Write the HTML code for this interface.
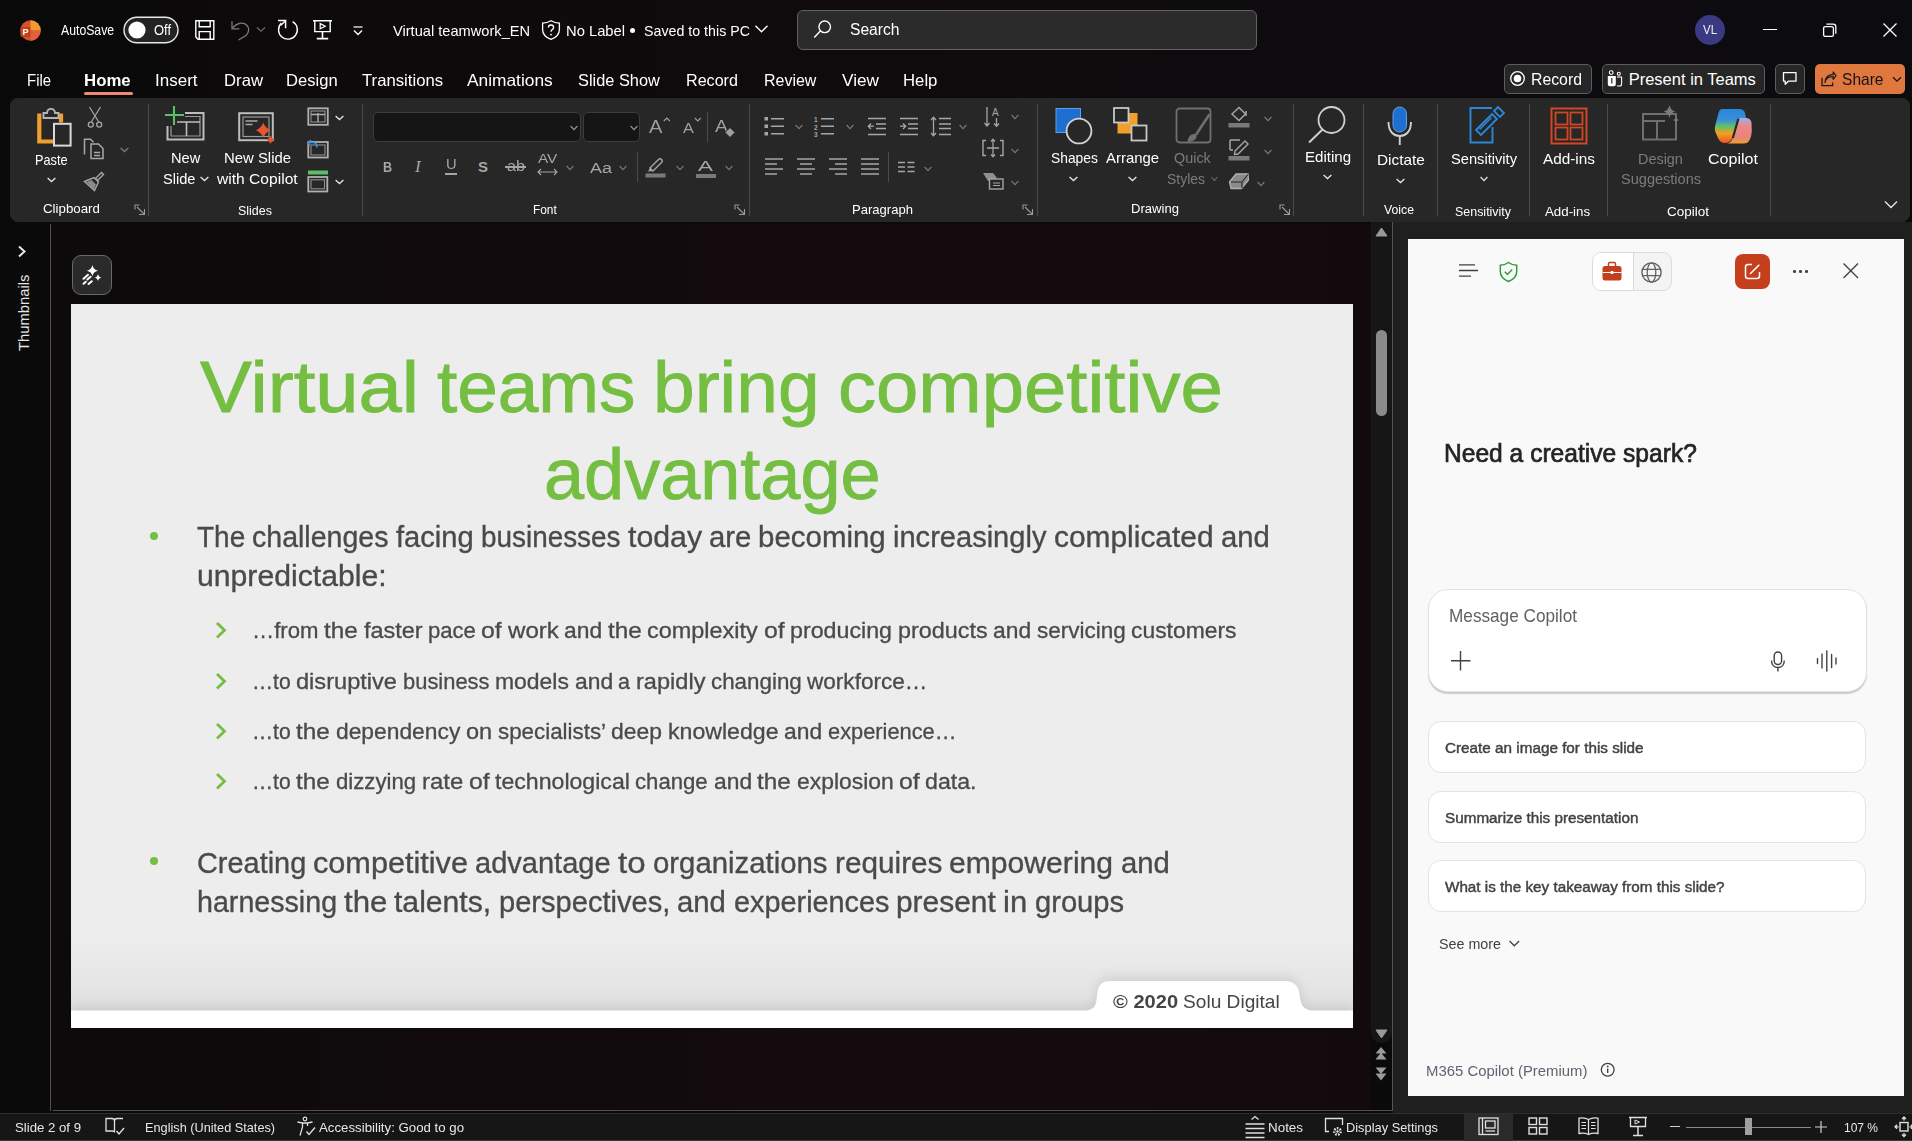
<!DOCTYPE html>
<html><head><meta charset="utf-8"><style>
html,body{margin:0;padding:0;width:1912px;height:1141px;overflow:hidden;background:#0b0a0b}
body{position:relative;font-family:"Liberation Sans",sans-serif}
.abs{position:absolute}
.t{position:absolute;white-space:nowrap;line-height:1;transform-origin:0 0}
svg{overflow:visible}
</style></head><body>
<div class="abs" style="left:0;top:0;width:1912px;height:98px;background:linear-gradient(90deg,#0a090a 0%,#0f0b0d 40%,#0e0b0e 70%,#0c0b0f 100%)"></div>
<div class="abs" style="left:0;top:98px;width:1912px;height:1015px;background:#0b0a0b"></div>
<div class="abs" style="left:10px;top:98px;width:1900px;height:124px;border-radius:8px;background:#272727"></div>
<div class="abs" style="left:51px;top:224px;width:1320px;height:886px;background:linear-gradient(90deg,#0c0a0b 0%,#100a0c 30%,#140b0e 65%,#130a0d 100%)"></div>
<div class="abs" style="left:50px;top:224px;width:1px;height:887px;background:#505050"></div>
<div class="abs" style="left:53px;top:1110px;width:1339px;height:1px;background:#505050"></div>
<div class="abs" style="left:1371px;top:222px;width:21px;height:821px;background:#161616;border-radius:0 0 10px 10px"></div>
<div class="abs" style="left:1392px;top:222px;width:1px;height:889px;background:#555"></div>
<div class="abs" style="left:1393px;top:222px;width:519px;height:891px;background:#1f1f1f"></div>
<div class="abs" style="left:1376px;top:330px;width:11px;height:86px;border-radius:6px;background:#8a8a8a"></div>
<div class="abs" style="left:0;top:1113px;width:1912px;height:28px;background:#161616;border-top:1px solid #2e2e2e;box-sizing:border-box"></div>
<div class="abs" style="left:71px;top:304px;width:1282px;height:724px;background:#ededed;overflow:hidden"><div class="abs" style="left:0;top:630px;width:1282px;height:77px;background:linear-gradient(180deg,rgba(225,225,225,0) 0%,rgba(224,224,224,.55) 60%,#dfdfdf 100%)"></div><svg class="abs" style="left:0;top:640px;filter:drop-shadow(0 -3px 6px rgba(0,0,0,0.10))" width="1282" height="84" viewBox="0 640 1282 84"><path d="M0 706.6 H1013 C1021 706.6 1025 703 1025.5 696 L1026.5 688 C1027.5 681 1031 677 1039 677 H1214 C1222 677 1227 681 1228 688 L1229.5 696 C1230.5 703 1235 706.6 1243 706.6 H1282 V724 H0 Z" fill="#ffffff"/></svg></div>
<div class="t" style="left:199.90px;top:350.41px;font-size:73px;color:#74be42;transform:scaleX(1.0658);-webkit-text-stroke:0.9px #74be42;">Virtual</div>
<div class="t" style="left:436.96px;top:350.41px;font-size:73px;color:#74be42;transform:scaleX(0.9983);-webkit-text-stroke:0.9px #74be42;">teams</div>
<div class="t" style="left:653.34px;top:350.41px;font-size:73px;color:#74be42;transform:scaleX(1.0261);-webkit-text-stroke:0.9px #74be42;">bring</div>
<div class="t" style="left:837.83px;top:350.41px;font-size:73px;color:#74be42;transform:scaleX(1.0421);-webkit-text-stroke:0.9px #74be42;">competitive</div>
<div class="t" style="left:543.80px;top:437.21px;font-size:73px;color:#74be42;transform:scaleX(0.9871);-webkit-text-stroke:0.9px #74be42;">advantage</div>
<div class="t" style="left:196.80px;top:522.00px;font-size:30px;color:#4a4a4a;transform:scaleX(0.9335);-webkit-text-stroke:0.35px #4a4a4a;">The</div>
<div class="t" style="left:252.28px;top:522.00px;font-size:30px;color:#4a4a4a;transform:scaleX(0.9509);-webkit-text-stroke:0.35px #4a4a4a;">challenges</div>
<div class="t" style="left:395.88px;top:522.00px;font-size:30px;color:#4a4a4a;transform:scaleX(0.9709);-webkit-text-stroke:0.35px #4a4a4a;">facing</div>
<div class="t" style="left:480.82px;top:522.00px;font-size:30px;color:#4a4a4a;transform:scaleX(0.9293);-webkit-text-stroke:0.35px #4a4a4a;">businesses</div>
<div class="t" style="left:627.52px;top:522.00px;font-size:30px;color:#4a4a4a;transform:scaleX(1.0098);-webkit-text-stroke:0.35px #4a4a4a;">today</div>
<div class="t" style="left:708.84px;top:522.00px;font-size:30px;color:#4a4a4a;transform:scaleX(0.9765);-webkit-text-stroke:0.35px #4a4a4a;">are</div>
<div class="t" style="left:758.41px;top:522.00px;font-size:30px;color:#4a4a4a;transform:scaleX(0.9819);-webkit-text-stroke:0.35px #4a4a4a;">becoming</div>
<div class="t" style="left:893.35px;top:522.00px;font-size:30px;color:#4a4a4a;transform:scaleX(0.9685);-webkit-text-stroke:0.35px #4a4a4a;">increasingly</div>
<div class="t" style="left:1053.99px;top:522.00px;font-size:30px;color:#4a4a4a;transform:scaleX(0.9966);-webkit-text-stroke:0.35px #4a4a4a;">complicated</div>
<div class="t" style="left:1220.74px;top:522.00px;font-size:30px;color:#4a4a4a;transform:scaleX(0.9765);-webkit-text-stroke:0.35px #4a4a4a;">and</div>
<div class="t" style="left:196.80px;top:560.81px;font-size:30px;color:#4a4a4a;transform:scaleX(1.0060);-webkit-text-stroke:0.35px #4a4a4a;">unpredictable:</div>
<div class="t" style="left:252.10px;top:620.70px;font-size:21.5px;color:#4a4a4a;transform:scaleX(1.0306);-webkit-text-stroke:0.3px #4a4a4a;">…from</div>
<div class="t" style="left:324.20px;top:620.70px;font-size:21.5px;color:#4a4a4a;transform:scaleX(1.1304);-webkit-text-stroke:0.3px #4a4a4a;">the</div>
<div class="t" style="left:363.61px;top:620.70px;font-size:21.5px;color:#4a4a4a;transform:scaleX(1.0904);-webkit-text-stroke:0.3px #4a4a4a;">faster</div>
<div class="t" style="left:427.86px;top:620.70px;font-size:21.5px;color:#4a4a4a;transform:scaleX(1.0272);-webkit-text-stroke:0.3px #4a4a4a;">pace</div>
<div class="t" style="left:481.38px;top:620.70px;font-size:21.5px;color:#4a4a4a;transform:scaleX(1.1552);-webkit-text-stroke:0.3px #4a4a4a;">of</div>
<div class="t" style="left:507.72px;top:620.70px;font-size:21.5px;color:#4a4a4a;transform:scaleX(1.1211);-webkit-text-stroke:0.3px #4a4a4a;">work</div>
<div class="t" style="left:564.23px;top:620.70px;font-size:21.5px;color:#4a4a4a;transform:scaleX(1.0611);-webkit-text-stroke:0.3px #4a4a4a;">and</div>
<div class="t" style="left:607.92px;top:620.70px;font-size:21.5px;color:#4a4a4a;transform:scaleX(1.1304);-webkit-text-stroke:0.3px #4a4a4a;">the</div>
<div class="t" style="left:647.33px;top:620.70px;font-size:21.5px;color:#4a4a4a;transform:scaleX(1.0906);-webkit-text-stroke:0.3px #4a4a4a;">complexity</div>
<div class="t" style="left:763.71px;top:620.70px;font-size:21.5px;color:#4a4a4a;transform:scaleX(1.1552);-webkit-text-stroke:0.3px #4a4a4a;">of</div>
<div class="t" style="left:790.04px;top:620.70px;font-size:21.5px;color:#4a4a4a;transform:scaleX(1.0804);-webkit-text-stroke:0.3px #4a4a4a;">producing</div>
<div class="t" style="left:897.69px;top:620.70px;font-size:21.5px;color:#4a4a4a;transform:scaleX(1.0865);-webkit-text-stroke:0.3px #4a4a4a;">products</div>
<div class="t" style="left:992.91px;top:620.70px;font-size:21.5px;color:#4a4a4a;transform:scaleX(1.0611);-webkit-text-stroke:0.3px #4a4a4a;">and</div>
<div class="t" style="left:1036.60px;top:620.70px;font-size:21.5px;color:#4a4a4a;transform:scaleX(1.0461);-webkit-text-stroke:0.3px #4a4a4a;">servicing</div>
<div class="t" style="left:1130.97px;top:620.70px;font-size:21.5px;color:#4a4a4a;transform:scaleX(1.0633);-webkit-text-stroke:0.3px #4a4a4a;">customers</div>
<div class="t" style="left:252.10px;top:671.70px;font-size:21.5px;color:#4a4a4a;transform:scaleX(0.9807);-webkit-text-stroke:0.3px #4a4a4a;">…to</div>
<div class="t" style="left:296.39px;top:671.70px;font-size:21.5px;color:#4a4a4a;transform:scaleX(1.0975);-webkit-text-stroke:0.3px #4a4a4a;">disruptive</div>
<div class="t" style="left:403.01px;top:671.70px;font-size:21.5px;color:#4a4a4a;transform:scaleX(1.0193);-webkit-text-stroke:0.3px #4a4a4a;">business</div>
<div class="t" style="left:495.13px;top:671.70px;font-size:21.5px;color:#4a4a4a;transform:scaleX(1.0661);-webkit-text-stroke:0.3px #4a4a4a;">models</div>
<div class="t" style="left:574.64px;top:671.70px;font-size:21.5px;color:#4a4a4a;transform:scaleX(1.0611);-webkit-text-stroke:0.3px #4a4a4a;">and</div>
<div class="t" style="left:618.33px;top:671.70px;font-size:21.5px;color:#4a4a4a;transform:scaleX(0.9967);-webkit-text-stroke:0.3px #4a4a4a;">a</div>
<div class="t" style="left:635.87px;top:671.70px;font-size:21.5px;color:#4a4a4a;transform:scaleX(1.0960);-webkit-text-stroke:0.3px #4a4a4a;">rapidly</div>
<div class="t" style="left:710.91px;top:671.70px;font-size:21.5px;color:#4a4a4a;transform:scaleX(1.0403);-webkit-text-stroke:0.3px #4a4a4a;">changing</div>
<div class="t" style="left:807.32px;top:671.70px;font-size:21.5px;color:#4a4a4a;transform:scaleX(1.0497);-webkit-text-stroke:0.3px #4a4a4a;">workforce…</div>
<div class="t" style="left:252.10px;top:722.20px;font-size:21.5px;color:#4a4a4a;transform:scaleX(0.9807);-webkit-text-stroke:0.3px #4a4a4a;">…to</div>
<div class="t" style="left:296.39px;top:722.20px;font-size:21.5px;color:#4a4a4a;transform:scaleX(1.1304);-webkit-text-stroke:0.3px #4a4a4a;">the</div>
<div class="t" style="left:335.80px;top:722.20px;font-size:21.5px;color:#4a4a4a;transform:scaleX(1.0608);-webkit-text-stroke:0.3px #4a4a4a;">dependency</div>
<div class="t" style="left:465.71px;top:722.20px;font-size:21.5px;color:#4a4a4a;transform:scaleX(1.0953);-webkit-text-stroke:0.3px #4a4a4a;">on</div>
<div class="t" style="left:497.52px;top:722.20px;font-size:21.5px;color:#4a4a4a;transform:scaleX(1.0396);-webkit-text-stroke:0.3px #4a4a4a;">specialists’</div>
<div class="t" style="left:611.22px;top:722.20px;font-size:21.5px;color:#4a4a4a;transform:scaleX(1.0643);-webkit-text-stroke:0.3px #4a4a4a;">deep</div>
<div class="t" style="left:667.75px;top:722.20px;font-size:21.5px;color:#4a4a4a;transform:scaleX(1.0753);-webkit-text-stroke:0.3px #4a4a4a;">knowledge</div>
<div class="t" style="left:783.91px;top:722.20px;font-size:21.5px;color:#4a4a4a;transform:scaleX(1.0611);-webkit-text-stroke:0.3px #4a4a4a;">and</div>
<div class="t" style="left:827.60px;top:722.20px;font-size:21.5px;color:#4a4a4a;transform:scaleX(1.0148);-webkit-text-stroke:0.3px #4a4a4a;">experience…</div>
<div class="t" style="left:252.10px;top:772.40px;font-size:21.5px;color:#4a4a4a;transform:scaleX(0.9807);-webkit-text-stroke:0.3px #4a4a4a;">…to</div>
<div class="t" style="left:296.39px;top:772.40px;font-size:21.5px;color:#4a4a4a;transform:scaleX(1.1304);-webkit-text-stroke:0.3px #4a4a4a;">the</div>
<div class="t" style="left:335.80px;top:772.40px;font-size:21.5px;color:#4a4a4a;transform:scaleX(1.0324);-webkit-text-stroke:0.3px #4a4a4a;">dizzying</div>
<div class="t" style="left:421.62px;top:772.40px;font-size:21.5px;color:#4a4a4a;transform:scaleX(1.1149);-webkit-text-stroke:0.3px #4a4a4a;">rate</div>
<div class="t" style="left:468.55px;top:772.40px;font-size:21.5px;color:#4a4a4a;transform:scaleX(1.1552);-webkit-text-stroke:0.3px #4a4a4a;">of</div>
<div class="t" style="left:494.89px;top:772.40px;font-size:21.5px;color:#4a4a4a;transform:scaleX(1.0748);-webkit-text-stroke:0.3px #4a4a4a;">technological</div>
<div class="t" style="left:635.41px;top:772.40px;font-size:21.5px;color:#4a4a4a;transform:scaleX(1.0303);-webkit-text-stroke:0.3px #4a4a4a;">change</div>
<div class="t" style="left:713.70px;top:772.40px;font-size:21.5px;color:#4a4a4a;transform:scaleX(1.0611);-webkit-text-stroke:0.3px #4a4a4a;">and</div>
<div class="t" style="left:757.39px;top:772.40px;font-size:21.5px;color:#4a4a4a;transform:scaleX(1.1304);-webkit-text-stroke:0.3px #4a4a4a;">the</div>
<div class="t" style="left:796.80px;top:772.40px;font-size:21.5px;color:#4a4a4a;transform:scaleX(1.0644);-webkit-text-stroke:0.3px #4a4a4a;">explosion</div>
<div class="t" style="left:899.11px;top:772.40px;font-size:21.5px;color:#4a4a4a;transform:scaleX(1.1552);-webkit-text-stroke:0.3px #4a4a4a;">of</div>
<div class="t" style="left:925.45px;top:772.40px;font-size:21.5px;color:#4a4a4a;transform:scaleX(1.0775);-webkit-text-stroke:0.3px #4a4a4a;">data.</div>
<div class="t" style="left:196.60px;top:848.11px;font-size:30px;color:#4a4a4a;transform:scaleX(0.9634);-webkit-text-stroke:0.35px #4a4a4a;">Creating</div>
<div class="t" style="left:313.06px;top:848.11px;font-size:30px;color:#4a4a4a;transform:scaleX(1.0213);-webkit-text-stroke:0.35px #4a4a4a;">competitive</div>
<div class="t" style="left:475.24px;top:848.11px;font-size:30px;color:#4a4a4a;transform:scaleX(0.9674);-webkit-text-stroke:0.35px #4a4a4a;">advantage</div>
<div class="t" style="left:618.02px;top:848.11px;font-size:30px;color:#4a4a4a;transform:scaleX(1.1012);-webkit-text-stroke:0.35px #4a4a4a;">to</div>
<div class="t" style="left:652.79px;top:848.11px;font-size:30px;color:#4a4a4a;transform:scaleX(0.9781);-webkit-text-stroke:0.35px #4a4a4a;">organizations</div>
<div class="t" style="left:834.55px;top:848.11px;font-size:30px;color:#4a4a4a;transform:scaleX(0.9916);-webkit-text-stroke:0.35px #4a4a4a;">requires</div>
<div class="t" style="left:949.25px;top:848.11px;font-size:30px;color:#4a4a4a;transform:scaleX(1.0041);-webkit-text-stroke:0.35px #4a4a4a;">empowering</div>
<div class="t" style="left:1120.56px;top:848.11px;font-size:30px;color:#4a4a4a;transform:scaleX(0.9765);-webkit-text-stroke:0.35px #4a4a4a;">and</div>
<div class="t" style="left:196.60px;top:886.50px;font-size:30px;color:#4a4a4a;transform:scaleX(0.9544);-webkit-text-stroke:0.35px #4a4a4a;">harnessing</div>
<div class="t" style="left:343.89px;top:886.50px;font-size:30px;color:#4a4a4a;transform:scaleX(1.0403);-webkit-text-stroke:0.35px #4a4a4a;">the</div>
<div class="t" style="left:394.49px;top:886.50px;font-size:30px;color:#4a4a4a;transform:scaleX(1.0048);-webkit-text-stroke:0.35px #4a4a4a;">talents,</div>
<div class="t" style="left:498.91px;top:886.50px;font-size:30px;color:#4a4a4a;transform:scaleX(0.9694);-webkit-text-stroke:0.35px #4a4a4a;">perspectives,</div>
<div class="t" style="left:677.47px;top:886.50px;font-size:30px;color:#4a4a4a;transform:scaleX(0.9765);-webkit-text-stroke:0.35px #4a4a4a;">and</div>
<div class="t" style="left:733.57px;top:886.50px;font-size:30px;color:#4a4a4a;transform:scaleX(0.9612);-webkit-text-stroke:0.35px #4a4a4a;">experiences</div>
<div class="t" style="left:896.27px;top:886.50px;font-size:30px;color:#4a4a4a;transform:scaleX(0.9964);-webkit-text-stroke:0.35px #4a4a4a;">present</div>
<div class="t" style="left:1003.20px;top:886.50px;font-size:30px;color:#4a4a4a;transform:scaleX(1.0330);-webkit-text-stroke:0.35px #4a4a4a;">in</div>
<div class="t" style="left:1034.54px;top:886.50px;font-size:30px;color:#4a4a4a;transform:scaleX(0.9713);-webkit-text-stroke:0.35px #4a4a4a;">groups</div>
<div class="abs" style="left:150.3px;top:531.8px;width:8px;height:8px;border-radius:50%;background:#74be42"></div>
<div class="abs" style="left:150.3px;top:857.0px;width:8px;height:8px;border-radius:50%;background:#74be42"></div>
<svg class="abs" style="left:214px;top:620.6px" width="14" height="18" viewBox="0 0 14 18"><path d="M3 2 L10.5 9.2 L3 16.5" fill="none" stroke="#74be42" stroke-width="2.8" stroke-linejoin="miter"/></svg>
<svg class="abs" style="left:214px;top:671.6px" width="14" height="18" viewBox="0 0 14 18"><path d="M3 2 L10.5 9.2 L3 16.5" fill="none" stroke="#74be42" stroke-width="2.8" stroke-linejoin="miter"/></svg>
<svg class="abs" style="left:214px;top:722.1px" width="14" height="18" viewBox="0 0 14 18"><path d="M3 2 L10.5 9.2 L3 16.5" fill="none" stroke="#74be42" stroke-width="2.8" stroke-linejoin="miter"/></svg>
<svg class="abs" style="left:214px;top:772.3px" width="14" height="18" viewBox="0 0 14 18"><path d="M3 2 L10.5 9.2 L3 16.5" fill="none" stroke="#74be42" stroke-width="2.8" stroke-linejoin="miter"/></svg>
<div class="t" style="left:1113.00px;top:991.62px;font-size:19px;color:#454545;font-weight:700;transform:scaleX(1.0569);">© 2020</div>
<div class="t" style="left:1183.00px;top:991.62px;font-size:19px;color:#454545;transform:scaleX(1.0062);">Solu Digital</div>
<svg class="abs" style="left:19px;top:19px" width="23" height="23" viewBox="0 0 23 23"><circle cx="11.5" cy="11.5" r="10.2" fill="#d35230"/>
<path d="M11.5 1.3 A10.2 10.2 0 0 1 21.7 11.5 L11.5 11.5 Z" fill="#ed9a2e"/>
<path d="M21.7 11.5 A10.2 10.2 0 0 1 11.5 21.7 L11.5 11.5 Z" fill="#e2603a"/>
<rect x="1.5" y="8" width="10" height="10" rx="1.5" fill="#c43e1c"/>
<text x="6.5" y="16.3" font-family="Liberation Sans" font-weight="700" font-size="9" fill="#fff" text-anchor="middle">P</text></svg>
<div class="t" style="left:61.00px;top:23.03px;font-size:14.5px;color:#ffffff;transform:scaleX(0.8446);">AutoSave</div>
<svg class="abs" style="left:123px;top:16px" width="56" height="28" viewBox="0 0 56 28"><rect x="1" y="1.2" width="54" height="25.5" rx="12.7" fill="#232323" stroke="#e8e8e8" stroke-width="1.4"/>
<circle cx="14" cy="14" r="8.6" fill="#fff"/></svg>
<div class="t" style="left:153.80px;top:22.53px;font-size:14.5px;color:#ffffff;transform:scaleX(0.8935);">Off</div>
<svg class="abs" style="left:194px;top:19px" width="23" height="23" viewBox="0 0 23 23"><path d="M1.8 1.8 H19.8 V20.2 H4 L1.8 18 Z" fill="none" stroke="#fff" stroke-width="1.4"/>
<path d="M5.2 1.8 V7.8 H16.2 V1.8" fill="none" stroke="#fff" stroke-width="1.4"/>
<path d="M5.2 20.2 V12.6 H16.2 V20.2" fill="none" stroke="#fff" stroke-width="1.4"/></svg>
<svg class="abs" style="left:230px;top:19px" width="22" height="23" viewBox="0 0 22 23"><path d="M2 2.2 V9.8 H9.4" fill="none" stroke="#7a7a7a" stroke-width="1.3"/>
<path d="M2.6 9.2 C6 4.2 13 2.2 16.8 6.2 C20 9.5 18.5 13.5 16 16.5 L8.5 21" fill="none" stroke="#7a7a7a" stroke-width="1.3"/></svg>
<svg class="abs" style="left:256px;top:26px" width="10" height="7" viewBox="0 0 10 7"><path d="M1 1.3 L5 5.3 L9 1.3" fill="none" stroke="#7a7a7a" stroke-width="1.1"/></svg>
<svg class="abs" style="left:277px;top:19px" width="23" height="23" viewBox="0 0 23 23"><path d="M4.3 4.1 A9.4 9.4 0 1 0 15.6 2.6" fill="none" stroke="#fff" stroke-width="1.4"/>
<path d="M1 1.6 H8.6 V9.2" fill="none" stroke="#fff" stroke-width="1.5"/><path d="M8.2 2 L3.5 6.5" stroke="#fff" stroke-width="1.4"/></svg>
<svg class="abs" style="left:312px;top:19px" width="22" height="22" viewBox="0 0 22 22"><path d="M1 1.8 H20 M2.8 1.8 V12.6 H18.2 V1.8" fill="none" stroke="#fff" stroke-width="1.4"/>
<path d="M8.2 4.6 L13.2 7.2 L8.2 9.8 Z" fill="none" stroke="#fff" stroke-width="1.2"/>
<path d="M10.5 12.6 V19 M4.8 19.6 H16.2" fill="none" stroke="#fff" stroke-width="1.6"/></svg>
<svg class="abs" style="left:352px;top:25px" width="12" height="12" viewBox="0 0 12 12"><path d="M1.5 2 H10.5" stroke="#fff" stroke-width="1.2"/><path d="M2 5.5 L6 9.5 L10 5.5" fill="none" stroke="#fff" stroke-width="1.3"/></svg>
<div class="t" style="left:393.00px;top:22.60px;font-size:15px;color:#ffffff;transform:scaleX(0.9751);">Virtual teamwork_EN</div>
<svg class="abs" style="left:540px;top:19px" width="22" height="22" viewBox="0 0 22 22"><path d="M11 1.8 C8 3.6 5 4.2 2.6 4.2 V10.5 C2.6 15.2 6 18.6 11 20.4 C16 18.6 19.4 15.2 19.4 10.5 V4.2 C17 4.2 14 3.6 11 1.8 Z" fill="none" stroke="#fff" stroke-width="1.3"/>
<path d="M8.4 8.4 C8.4 5.2 13.6 5.2 13.6 8.4 C13.6 10.6 11 10.6 11 12.8" fill="none" stroke="#fff" stroke-width="1.3"/>
<circle cx="11" cy="15.6" r="0.9" fill="#fff"/></svg>
<div class="t" style="left:566.00px;top:22.60px;font-size:15px;color:#ffffff;transform:scaleX(0.9833);">No Label</div>
<div class="abs" style="left:630px;top:28px;width:5px;height:5px;border-radius:50%;background:#fff"></div>
<div class="t" style="left:644.00px;top:22.60px;font-size:15px;color:#ffffff;transform:scaleX(0.9485);">Saved to this PC</div>
<svg class="abs" style="left:754px;top:24px" width="15" height="10" viewBox="0 0 15 10"><path d="M1.5 1.8 L7.5 7.8 L13.5 1.8" fill="none" stroke="#fff" stroke-width="1.4"/></svg>
<div class="abs" style="left:797px;top:10px;width:460px;height:40px;box-sizing:border-box;border:1px solid #626262;border-radius:6px;background:#2b2b2b"></div>
<svg class="abs" style="left:813px;top:19px" width="20" height="21" viewBox="0 0 20 21"><circle cx="11.7" cy="7.8" r="5.8" fill="none" stroke="#fff" stroke-width="1.4"/><path d="M7.6 11.8 L1.2 18.6" stroke="#fff" stroke-width="1.4"/></svg>
<div class="t" style="left:849.50px;top:21.76px;font-size:16px;color:#ffffff;transform:scaleX(0.9754);">Search</div>
<div class="abs" style="left:1695px;top:15px;width:30px;height:30px;border-radius:50%;background:#3a3a82"></div>
<div class="t" style="left:1703.00px;top:24.02px;font-size:12.5px;color:#f2f2f2;transform:scaleX(0.9180);">VL</div>
<div class="abs" style="left:1763px;top:29px;width:14px;height:1.3px;background:#fff"></div>
<svg class="abs" style="left:1822px;top:22px" width="16" height="16" viewBox="0 0 16 16"><rect x="1.6" y="4.6" width="9.8" height="9.8" rx="1.6" fill="none" stroke="#fff" stroke-width="1.3"/>
<path d="M4.4 2.2 H11.2 A2.6 2.6 0 0 1 13.8 4.8 V11.8" fill="none" stroke="#fff" stroke-width="1.3"/></svg>
<svg class="abs" style="left:1882px;top:22px" width="16" height="16" viewBox="0 0 16 16"><path d="M1.5 1.5 L14.5 14.5 M14.5 1.5 L1.5 14.5" stroke="#fff" stroke-width="1.3"/></svg>
<div class="t" style="left:26.50px;top:71.63px;font-size:16.5px;color:#ffffff;transform:scaleX(0.9057);">File</div>
<div class="t" style="left:84.40px;top:71.63px;font-size:16.5px;color:#ffffff;font-weight:700;transform:scaleX(1.0186);">Home</div>
<div class="t" style="left:155.00px;top:71.63px;font-size:16.5px;color:#ffffff;transform:scaleX(1.0303);">Insert</div>
<div class="t" style="left:223.50px;top:71.63px;font-size:16.5px;color:#ffffff;transform:scaleX(1.0130);">Draw</div>
<div class="t" style="left:286.00px;top:71.63px;font-size:16.5px;color:#ffffff;transform:scaleX(1.0049);">Design</div>
<div class="t" style="left:362.00px;top:71.63px;font-size:16.5px;color:#ffffff;transform:scaleX(1.0125);">Transitions</div>
<div class="t" style="left:467.40px;top:71.63px;font-size:16.5px;color:#ffffff;transform:scaleX(1.0503);">Animations</div>
<div class="t" style="left:578.00px;top:71.63px;font-size:16.5px;color:#ffffff;transform:scaleX(0.9909);">Slide Show</div>
<div class="t" style="left:685.50px;top:71.63px;font-size:16.5px;color:#ffffff;transform:scaleX(0.9765);">Record</div>
<div class="t" style="left:764.00px;top:71.63px;font-size:16.5px;color:#ffffff;transform:scaleX(0.9677);">Review</div>
<div class="t" style="left:842.00px;top:71.63px;font-size:16.5px;color:#ffffff;transform:scaleX(1.0423);">View</div>
<div class="t" style="left:903.00px;top:71.63px;font-size:16.5px;color:#ffffff;transform:scaleX(1.0147);">Help</div>
<div class="abs" style="left:84px;top:92px;width:49px;height:3px;border-radius:1.5px;background:#ee8a6e"></div>
<div class="abs" style="left:1504px;top:64px;width:88px;height:30px;box-sizing:border-box;border:1px solid #5c5c5c;border-radius:5px;background:#262626"></div>
<svg class="abs" style="left:1509px;top:70px" width="17" height="17" viewBox="0 0 17 17"><circle cx="8.5" cy="8.5" r="6.8" fill="none" stroke="#fff" stroke-width="1.3"/><circle cx="8.5" cy="8.5" r="3.8" fill="#fff"/></svg>
<div class="t" style="left:1531.00px;top:70.73px;font-size:16.5px;color:#ffffff;transform:scaleX(0.9577);">Record</div>
<div class="abs" style="left:1602px;top:64px;width:163px;height:30px;box-sizing:border-box;border:1px solid #5c5c5c;border-radius:5px;background:#262626"></div>
<svg class="abs" style="left:1606px;top:70px" width="18" height="18" viewBox="0 0 18 18"><circle cx="5.2" cy="2.6" r="1.9" fill="none" stroke="#fff" stroke-width="1.1"/><circle cx="12.8" cy="3.8" r="1.5" fill="none" stroke="#fff" stroke-width="1.1"/>
<path d="M1.8 6 H9.8 V14.2 A2 2 0 0 1 7.8 16.2 H3.8 A2 2 0 0 1 1.8 14.2 Z" fill="#fff"/>
<path d="M11 7 H15.6 V14 A2 2 0 0 1 13.6 16 H11" fill="none" stroke="#fff" stroke-width="1.1"/>
<path d="M5.8 8 V13.5" stroke="#262626" stroke-width="1.2"/></svg>
<div class="t" style="left:1628.70px;top:70.73px;font-size:16.5px;color:#ffffff;">Present in Teams</div>
<div class="abs" style="left:1775px;top:64px;width:30px;height:30px;box-sizing:border-box;border:1px solid #5c5c5c;border-radius:5px;background:#262626"></div>
<svg class="abs" style="left:1782px;top:71px" width="16" height="16" viewBox="0 0 16 16"><path d="M1.5 1.6 H14 V10.2 H6.4 L3.2 13.2 V10.2 H1.5 Z" fill="none" stroke="#fff" stroke-width="1.3" stroke-linejoin="round"/></svg>
<div class="abs" style="left:1815px;top:64px;width:90px;height:30px;border-radius:5px;background:#df773f"></div>
<svg class="abs" style="left:1820px;top:71px" width="17" height="17" viewBox="0 0 17 17"><path d="M2 6.8 V14.6 H12.6 V11.5" fill="none" stroke="#1a1a1a" stroke-width="1.3"/>
<path d="M5 11.5 C5.5 7.5 8.5 5.6 13.2 5.6 V8.5 L16 4.6 L13.2 1 V3.6 C8.4 3.6 5.4 6.6 5 11.5 Z" fill="none" stroke="#1a1a1a" stroke-width="1.2" stroke-linejoin="round"/></svg>
<div class="t" style="left:1842.00px;top:70.63px;font-size:16.5px;color:#141414;transform:scaleX(0.9432);">Share</div>
<svg class="abs" style="left:1892px;top:76px" width="10" height="7" viewBox="0 0 10 7"><path d="M1 1.2 L5 5.2 L9 1.2" fill="none" stroke="#141414" stroke-width="1.3"/></svg>
<svg class="abs" style="left:36px;top:106px" width="38" height="42" viewBox="0 0 38 42"><path d="M3.3 7.5 V35.5 H17" fill="none" stroke="#f0a02a" stroke-width="4.2"/>
<path d="M25 7.5 V16.5" fill="none" stroke="#f0a02a" stroke-width="4.2"/>
<path d="M7.5 7 H11 C11.5 1.5 18.5 1.5 19 7 H22.5 V12 H7.5 Z" fill="none" stroke="#b4b4b4" stroke-width="1.9"/>
<rect x="18" y="17.8" width="16.6" height="21.8" fill="#272727" stroke="#d9d9d9" stroke-width="2"/></svg>
<div class="t" style="left:35.00px;top:153.43px;font-size:14.5px;color:#ffffff;transform:scaleX(0.8784);">Paste</div>
<svg class="abs" style="left:46.5px;top:176.5px" width="9" height="6" viewBox="0 0 9 6"><path d="M0.6 1 L4.5 4.6 L8.4 1" fill="none" stroke="#e6e6e6" stroke-width="1.3"/></svg>
<svg class="abs" style="left:86px;top:106px" width="18" height="23" viewBox="0 0 18 23"><path d="M3.5 1 L12.5 15.5 M14.5 1 L5.5 15.5" stroke="#a8a8a8" stroke-width="1.2"/>
<circle cx="4.8" cy="18.6" r="2.5" fill="none" stroke="#a8a8a8" stroke-width="1.3"/><circle cx="13.2" cy="18.6" r="2.5" fill="none" stroke="#a8a8a8" stroke-width="1.3"/></svg>
<svg class="abs" style="left:83px;top:138px" width="22" height="22" viewBox="0 0 22 22"><path d="M1.5 16.5 V1.3 H7.5 L10.5 4.3" fill="none" stroke="#a8a8a8" stroke-width="1.5"/>
<path d="M8 20.5 V6 H15.5 L20 10.5 V20.5 Z" fill="none" stroke="#a8a8a8" stroke-width="1.5"/><path d="M11 14.5 H17 M11 17.5 H17" stroke="#a8a8a8" stroke-width="1.3"/></svg>
<svg class="abs" style="left:119.5px;top:146.5px" width="9" height="6" viewBox="0 0 9 6"><path d="M0.6 1 L4.5 4.6 L8.4 1" fill="none" stroke="#7a7a7a" stroke-width="1.3"/></svg>
<svg class="abs" style="left:83px;top:170px" width="22" height="22" viewBox="0 0 22 22"><path d="M12.5 8.5 L18.5 2.5 L20.5 4.5 L14.5 10.5 Z" fill="none" stroke="#a8a8a8" stroke-width="1.4"/>
<path d="M1.5 11.5 L11 7.5 L15.5 12 L11.5 20.5 Z" fill="none" stroke="#a8a8a8" stroke-width="1.4"/><path d="M3.5 12 L11 19.5 L13 14.5 L8.5 10 Z" fill="#8a8a8a"/></svg>
<div class="t" style="left:42.50px;top:202.40px;font-size:13px;color:#ffffff;transform:scaleX(1.0224);">Clipboard</div>
<svg class="abs" style="left:134px;top:204px" width="12" height="12" viewBox="0 0 12 12"><path d="M1 5.5 V1 H5.5" fill="none" stroke="#9a9a9a" stroke-width="1.1"/><path d="M3 3 L10 10 M5 10.5 H10.5 V5" fill="none" stroke="#9a9a9a" stroke-width="1.1"/></svg>
<div class="abs" style="left:148px;top:104px;width:1px;height:112px;background:#4a4a4a"></div>
<svg class="abs" style="left:164px;top:105px" width="42" height="37" viewBox="0 0 42 37"><path d="M21 8 H39.5 V34.5 H3.5 V21" fill="none" stroke="#bdbdbd" stroke-width="2"/>
<path d="M21 11.5 H36 V31 H7 V21" fill="none" stroke="#9a9a9a" stroke-width="1.2"/>
<path d="M22.5 17 V31 M13 17 H36" stroke="#bdbdbd" stroke-width="1.6"/>
<path d="M10 1 V20 M1 10 H20" stroke="#5bc065" stroke-width="2.1"/></svg>
<div class="t" style="left:170.50px;top:151.33px;font-size:14.5px;color:#ffffff;transform:scaleX(1.0085);">New</div>
<div class="t" style="left:162.50px;top:171.53px;font-size:14.5px;color:#ffffff;transform:scaleX(1.0078);">Slide</div>
<svg class="abs" style="left:199.5px;top:176px" width="9" height="6" viewBox="0 0 9 6"><path d="M0.6 1 L4.5 4.6 L8.4 1" fill="none" stroke="#e6e6e6" stroke-width="1.3"/></svg>
<svg class="abs" style="left:238px;top:112px" width="38" height="33" viewBox="0 0 38 33"><rect x="1.2" y="1.2" width="33.6" height="27" fill="none" stroke="#bdbdbd" stroke-width="2"/>
<rect x="5" y="5" width="26" height="19.5" fill="none" stroke="#9a9a9a" stroke-width="1.2"/>
<path d="M7.5 9 H19.5 M7.5 12.5 H14.5" stroke="#a8a8a8" stroke-width="1.6"/>
<path d="M25.3 10.799999999999999 Q27.37 16.13 32.7 18.2 Q27.37 20.27 25.3 25.6 Q23.23 20.27 17.9 18.2 Q23.23 16.13 25.3 10.799999999999999 Z" fill="#e8552f"/>
<path d="M32.5 23.400000000000002 Q33.68 26.42 36.7 27.6 Q33.68 28.78 32.5 31.8 Q31.32 28.78 28.3 27.6 Q31.32 26.42 32.5 23.400000000000002 Z" fill="#e8552f"/></svg>
<div class="t" style="left:224.00px;top:151.33px;font-size:14.5px;color:#ffffff;transform:scaleX(1.0268);">New Slide</div>
<div class="t" style="left:217.27px;top:171.53px;font-size:14.5px;color:#ffffff;transform:scaleX(1.0764);">with Copilot</div>
<svg class="abs" style="left:307px;top:107px" width="23" height="20" viewBox="0 0 23 20"><rect x="1.3" y="1.3" width="19.5" height="16.5" fill="none" stroke="#b0b0b0" stroke-width="1.8"/><rect x="4" y="4" width="14" height="11" fill="none" stroke="#8f8f8f" stroke-width="1.1"/><path d="M11 6 V15 M4 7.5 H18" stroke="#b0b0b0" stroke-width="1.4"/></svg>
<svg class="abs" style="left:335px;top:114.5px" width="9" height="6" viewBox="0 0 9 6"><path d="M0.6 1 L4.5 4.6 L8.4 1" fill="none" stroke="#e6e6e6" stroke-width="1.3"/></svg>
<svg class="abs" style="left:307px;top:138px" width="23" height="21" viewBox="0 0 23 21"><rect x="1.3" y="4" width="19.5" height="15.5" fill="none" stroke="#b0b0b0" stroke-width="1.8"/><rect x="4" y="7" width="14" height="10" fill="none" stroke="#8f8f8f" stroke-width="1.1"/><path d="M3 7 L1 4.5 L3.8 2 M1.2 4.5 H6 C9 4.5 10 7 10 9.5" fill="none" stroke="#3d8fe0" stroke-width="1.6"/></svg>
<svg class="abs" style="left:307px;top:170px" width="23" height="23" viewBox="0 0 23 23"><rect x="1" y="0.5" width="20" height="4" fill="#5bc065"/><rect x="1.3" y="7" width="19" height="14.5" fill="none" stroke="#b0b0b0" stroke-width="1.8"/><rect x="4" y="9.8" width="13.5" height="9" fill="none" stroke="#8f8f8f" stroke-width="1.1"/></svg>
<svg class="abs" style="left:335px;top:179px" width="9" height="6" viewBox="0 0 9 6"><path d="M0.6 1 L4.5 4.6 L8.4 1" fill="none" stroke="#e6e6e6" stroke-width="1.3"/></svg>
<div class="t" style="left:238.00px;top:203.50px;font-size:13px;color:#ffffff;transform:scaleX(0.9577);">Slides</div>
<div class="abs" style="left:362px;top:104px;width:1px;height:112px;background:#4a4a4a"></div>
<div class="abs" style="left:373px;top:112px;width:208px;height:30px;box-sizing:border-box;border:1px solid #3c3c3c;border-radius:5px;background:#151515"></div>
<svg class="abs" style="left:569.5px;top:124.5px" width="8" height="6" viewBox="0 0 8 6"><path d="M0.6 1 L4.0 4.6 L7.4 1" fill="none" stroke="#9a9a9a" stroke-width="1.1"/></svg>
<div class="abs" style="left:583px;top:112px;width:57px;height:30px;box-sizing:border-box;border:1px solid #3c3c3c;border-radius:5px;background:#151515"></div>
<svg class="abs" style="left:629.5px;top:124.5px" width="8" height="6" viewBox="0 0 8 6"><path d="M0.6 1 L4.0 4.6 L7.4 1" fill="none" stroke="#9a9a9a" stroke-width="1.1"/></svg>
<div class="t" style="left:648.50px;top:117.42px;font-size:19px;color:#a0a0a0;transform:scaleX(1.0588);">A</div>
<svg class="abs" style="left:663px;top:117px" width="8" height="5" viewBox="0 0 8 5"><path d="M0.8 4 L3.8 1 L6.8 4" fill="none" stroke="#a0a0a0" stroke-width="1.1"/></svg>
<div class="t" style="left:683.00px;top:120.38px;font-size:15.5px;color:#a0a0a0;transform:scaleX(1.0476);">A</div>
<svg class="abs" style="left:694px;top:117px" width="8" height="5" viewBox="0 0 8 5"><path d="M0.8 1 L3.8 4 L6.8 1" fill="none" stroke="#a0a0a0" stroke-width="1.1"/></svg>
<div class="abs" style="left:707px;top:112px;width:1px;height:30px;background:#4a4a4a"></div>
<div class="t" style="left:715.00px;top:117.61px;font-size:17px;color:#a0a0a0;transform:scaleX(1.1304);">A</div>
<svg class="abs" style="left:721px;top:125px" width="16" height="14" viewBox="0 0 16 14"><path d="M4 7.5 L9 2.5 L14 7.5 L9 12.5 Z" fill="#a0a0a0" stroke="#272727" stroke-width="1"/></svg>
<div class="t" style="left:383.00px;top:159.95px;font-size:14px;color:#a6a6a6;font-weight:700;transform:scaleX(0.9000);">B</div>
<div class="t" style="left:415px;top:158px;font-size:17px;color:#a6a6a6;font-family:'Liberation Serif';font-style:italic">I</div>
<div class="t" style="left:445.50px;top:156.65px;font-size:14px;color:#a6a6a6;transform:scaleX(1.0500);">U</div>
<div class="abs" style="left:445px;top:173px;width:12px;height:2px;background:#a6a6a6"></div>
<div class="t" style="left:478.00px;top:159.30px;font-size:15px;color:#a6a6a6;font-weight:700;">S</div>
<div class="t" style="left:507.00px;top:159.15px;font-size:14px;color:#a6a6a6;transform:scaleX(1.1613);">ab</div>
<div class="abs" style="left:505px;top:166px;width:21px;height:1.5px;background:#a6a6a6"></div>
<div class="t" style="left:537.50px;top:152.00px;font-size:13px;color:#a6a6a6;transform:scaleX(1.1818);">AV</div>
<svg class="abs" style="left:537px;top:168px" width="21" height="8" viewBox="0 0 21 8"><path d="M1 4 H20 M4 1 L1 4 L4 7 M17 1 L20 4 L17 7" fill="none" stroke="#a6a6a6" stroke-width="1.1"/></svg>
<svg class="abs" style="left:565.5px;top:165px" width="8" height="6" viewBox="0 0 8 6"><path d="M0.6 1 L4.0 4.6 L7.4 1" fill="none" stroke="#7a7a7a" stroke-width="1.1"/></svg>
<div class="t" style="left:590.00px;top:159.88px;font-size:15.5px;color:#a6a6a6;transform:scaleX(1.1579);">Aa</div>
<svg class="abs" style="left:618.5px;top:165px" width="8" height="6" viewBox="0 0 8 6"><path d="M0.6 1 L4.0 4.6 L7.4 1" fill="none" stroke="#7a7a7a" stroke-width="1.1"/></svg>
<div class="abs" style="left:637px;top:152px;width:1px;height:30px;background:#4a4a4a"></div>
<svg class="abs" style="left:645px;top:156px" width="21" height="22" viewBox="0 0 21 22"><path d="M5 12 L13.5 3.5 A2 2 0 0 1 16.5 6.5 L8 15 Z" fill="none" stroke="#a6a6a6" stroke-width="1.4"/><path d="M5 12 L3 15.5 L8 15" fill="#a6a6a6"/><rect x="0.5" y="17.5" width="20" height="4" fill="#7a7a7a"/></svg>
<svg class="abs" style="left:675.5px;top:165px" width="8" height="6" viewBox="0 0 8 6"><path d="M0.6 1 L4.0 4.6 L7.4 1" fill="none" stroke="#7a7a7a" stroke-width="1.1"/></svg>
<div class="t" style="left:698.00px;top:157.80px;font-size:15px;color:#a6a6a6;transform:scaleX(1.5000);">A</div>
<div class="abs" style="left:696px;top:173.5px;width:20px;height:4px;background:#7a7a7a"></div>
<svg class="abs" style="left:724.5px;top:165px" width="8" height="6" viewBox="0 0 8 6"><path d="M0.6 1 L4.0 4.6 L7.4 1" fill="none" stroke="#7a7a7a" stroke-width="1.1"/></svg>
<div class="t" style="left:533.00px;top:203.00px;font-size:13px;color:#ffffff;transform:scaleX(0.9143);">Font</div>
<svg class="abs" style="left:734px;top:204px" width="12" height="12" viewBox="0 0 12 12"><path d="M1 5.5 V1 H5.5" fill="none" stroke="#9a9a9a" stroke-width="1.1"/><path d="M3 3 L10 10 M5 10.5 H10.5 V5" fill="none" stroke="#9a9a9a" stroke-width="1.1"/></svg>
<div class="abs" style="left:749px;top:104px;width:1px;height:112px;background:#4a4a4a"></div>
<svg class="abs" style="left:764px;top:116px" width="21" height="21" viewBox="0 0 21 21"><rect x="0.5" y="1" width="3.5" height="3.5" fill="#a6a6a6"/><rect x="0.5" y="8.5" width="3.5" height="3.5" fill="#a6a6a6"/><rect x="0.5" y="16" width="3.5" height="3.5" fill="#a6a6a6"/><path d="M7 2.8 H20 M7 10.3 H20 M7 17.8 H20" stroke="#a6a6a6" stroke-width="1.5"/></svg>
<svg class="abs" style="left:795px;top:124px" width="8" height="6" viewBox="0 0 8 6"><path d="M0.6 1 L4.0 4.6 L7.4 1" fill="none" stroke="#7a7a7a" stroke-width="1.1"/></svg>
<svg class="abs" style="left:814px;top:116px" width="21" height="21" viewBox="0 0 21 21"><text x="0" y="6" font-family="Liberation Sans" font-size="6.5" font-weight="700" fill="#a6a6a6">1</text><text x="0" y="13.5" font-family="Liberation Sans" font-size="6.5" font-weight="700" fill="#a6a6a6">2</text><text x="0" y="21" font-family="Liberation Sans" font-size="6.5" font-weight="700" fill="#a6a6a6">3</text><path d="M7 2.8 H20 M7 10.3 H20 M7 17.8 H20" stroke="#a6a6a6" stroke-width="1.5"/></svg>
<svg class="abs" style="left:845.5px;top:124px" width="8" height="6" viewBox="0 0 8 6"><path d="M0.6 1 L4.0 4.6 L7.4 1" fill="none" stroke="#7a7a7a" stroke-width="1.1"/></svg>
<svg class="abs" style="left:867px;top:116px" width="21" height="21" viewBox="0 0 21 21"><path d="M1 2.5 H19 M9 8 H19 M9 12.5 H19 M1 18.5 H19" stroke="#a6a6a6" stroke-width="1.5"/><path d="M7 10.2 H1.5 M4 7.5 L1.3 10.2 L4 13" fill="none" stroke="#a6a6a6" stroke-width="1.3"/></svg>
<svg class="abs" style="left:899px;top:116px" width="21" height="21" viewBox="0 0 21 21"><path d="M1 2.5 H19 M9 8 H19 M9 12.5 H19 M1 18.5 H19" stroke="#a6a6a6" stroke-width="1.5"/><path d="M1 10.2 H6.5 M4 7.5 L6.7 10.2 L4 13" fill="none" stroke="#a6a6a6" stroke-width="1.3"/></svg>
<svg class="abs" style="left:930px;top:116px" width="22" height="21" viewBox="0 0 22 21"><path d="M9 2.5 H21 M9 8 H21 M9 12.5 H21 M9 18.5 H21" stroke="#a6a6a6" stroke-width="1.5"/><path d="M3.5 1.5 V19.5 M1 4 L3.5 1.3 L6 4 M1 17 L3.5 19.7 L6 17" fill="none" stroke="#a6a6a6" stroke-width="1.3"/></svg>
<svg class="abs" style="left:959px;top:124px" width="8" height="6" viewBox="0 0 8 6"><path d="M0.6 1 L4.0 4.6 L7.4 1" fill="none" stroke="#7a7a7a" stroke-width="1.1"/></svg>
<svg class="abs" style="left:984px;top:106px" width="20" height="22" viewBox="0 0 20 22"><path d="M3 1 V20 M0.5 17 L3 20 L5.5 17" fill="none" stroke="#a6a6a6" stroke-width="1.3"/><text x="8" y="9.5" font-family="Liberation Sans" font-size="10" fill="#a6a6a6">A</text><path d="M12.5 12 V20 M10 17.5 L12.5 20.2 L15 17.5" fill="none" stroke="#a6a6a6" stroke-width="1.3"/></svg>
<svg class="abs" style="left:1011px;top:114px" width="8" height="6" viewBox="0 0 8 6"><path d="M0.6 1 L4.0 4.6 L7.4 1" fill="none" stroke="#7a7a7a" stroke-width="1.1"/></svg>
<svg class="abs" style="left:982px;top:138px" width="22" height="22" viewBox="0 0 22 22"><path d="M4 2.5 H1 V17.5 H4 M18 2.5 H21 V17.5 H18 M5 10 H17" fill="none" stroke="#a6a6a6" stroke-width="1.4"/><path d="M11 1 V19 M9 3.5 L11 1.2 L13 3.5 M9 16.5 L11 18.8 L13 16.5" fill="none" stroke="#a6a6a6" stroke-width="1.2"/></svg>
<svg class="abs" style="left:1011px;top:148px" width="8" height="6" viewBox="0 0 8 6"><path d="M0.6 1 L4.0 4.6 L7.4 1" fill="none" stroke="#7a7a7a" stroke-width="1.1"/></svg>
<svg class="abs" style="left:982px;top:172px" width="22" height="19" viewBox="0 0 22 19"><path d="M1 1 H11 L15 6 L6 9 Z" fill="#8f8f8f"/><rect x="7.5" y="7" width="13.5" height="10" fill="#272727" stroke="#a6a6a6" stroke-width="1.4"/><path d="M11 11 H18 M11 13.5 H18" stroke="#a6a6a6" stroke-width="1.1"/></svg>
<svg class="abs" style="left:1011px;top:180px" width="8" height="6" viewBox="0 0 8 6"><path d="M0.6 1 L4.0 4.6 L7.4 1" fill="none" stroke="#7a7a7a" stroke-width="1.1"/></svg>
<svg class="abs" style="left:764px;top:157px" width="21" height="20" viewBox="0 0 21 20"><path d="M1 2 H19 M1 7 H13 M1 12 H19 M1 17 H13" stroke="#a6a6a6" stroke-width="1.6"/></svg>
<svg class="abs" style="left:796px;top:157px" width="21" height="20" viewBox="0 0 21 20"><path d="M1 2 H19 M4 7 H16 M1 12 H19 M4 17 H16" stroke="#a6a6a6" stroke-width="1.6"/></svg>
<svg class="abs" style="left:828px;top:157px" width="21" height="20" viewBox="0 0 21 20"><path d="M1 2 H19 M7 7 H19 M1 12 H19 M7 17 H19" stroke="#a6a6a6" stroke-width="1.6"/></svg>
<svg class="abs" style="left:860px;top:157px" width="21" height="20" viewBox="0 0 21 20"><path d="M1 2 H19 M1 7 H19 M1 12 H19 M1 17 H19" stroke="#a6a6a6" stroke-width="1.6"/></svg>
<div class="abs" style="left:888px;top:152px;width:1px;height:30px;background:#4a4a4a"></div>
<svg class="abs" style="left:897px;top:161px" width="20" height="12" viewBox="0 0 20 12"><path d="M1 1.5 H8 M10.5 1.5 H17.5 M1 6 H8 M10.5 6 H17.5 M1 10.5 H8 M10.5 10.5 H17.5" stroke="#a6a6a6" stroke-width="1.5"/></svg>
<svg class="abs" style="left:923.5px;top:166px" width="8" height="6" viewBox="0 0 8 6"><path d="M0.6 1 L4.0 4.6 L7.4 1" fill="none" stroke="#7a7a7a" stroke-width="1.1"/></svg>
<div class="t" style="left:852.00px;top:203.00px;font-size:13px;color:#ffffff;transform:scaleX(1.0041);">Paragraph</div>
<svg class="abs" style="left:1022px;top:204px" width="12" height="12" viewBox="0 0 12 12"><path d="M1 5.5 V1 H5.5" fill="none" stroke="#9a9a9a" stroke-width="1.1"/><path d="M3 3 L10 10 M5 10.5 H10.5 V5" fill="none" stroke="#9a9a9a" stroke-width="1.1"/></svg>
<div class="abs" style="left:1037px;top:104px;width:1px;height:112px;background:#4a4a4a"></div>
<svg class="abs" style="left:1054px;top:106px" width="40" height="40" viewBox="0 0 40 40"><rect x="2" y="2.5" width="24.5" height="24" fill="#1f6fd1" stroke="#5aa0ee" stroke-width="1"/><circle cx="25" cy="25" r="12.4" fill="#272727" stroke="#d4d4d4" stroke-width="1.8"/></svg>
<div class="t" style="left:1051.00px;top:151.33px;font-size:14.5px;color:#ffffff;transform:scaleX(0.9543);">Shapes</div>
<svg class="abs" style="left:1068.5px;top:175.5px" width="9" height="6" viewBox="0 0 9 6"><path d="M0.6 1 L4.5 4.6 L8.4 1" fill="none" stroke="#e6e6e6" stroke-width="1.3"/></svg>
<svg class="abs" style="left:1112px;top:106px" width="40" height="40" viewBox="0 0 40 40"><rect x="5.5" y="7" width="20" height="20.5" fill="#f0a02a"/><rect x="2" y="2" width="14.5" height="14.5" fill="#272727" stroke="#c8c8c8" stroke-width="1.8"/><rect x="19.5" y="19.5" width="15" height="15" fill="#272727" stroke="#c8c8c8" stroke-width="1.8"/></svg>
<div class="t" style="left:1106.00px;top:151.33px;font-size:14.5px;color:#ffffff;transform:scaleX(1.0291);">Arrange</div>
<svg class="abs" style="left:1127.5px;top:175.5px" width="9" height="6" viewBox="0 0 9 6"><path d="M0.6 1 L4.5 4.6 L8.4 1" fill="none" stroke="#e6e6e6" stroke-width="1.3"/></svg>
<svg class="abs" style="left:1174px;top:106px" width="40" height="40" viewBox="0 0 40 40"><rect x="2.5" y="2.5" width="34" height="34" rx="3" fill="none" stroke="#6f6f6f" stroke-width="1.8"/><path d="M35 9 L22.5 28" stroke="#6f6f6f" stroke-width="2.6" stroke-linecap="round"/><path d="M13.5 36 C14 30 18 27 22 28.5 C24 31 21 36 13.5 36 Z" fill="#6f6f6f"/></svg>
<div class="t" style="left:1174.00px;top:151.33px;font-size:14.5px;color:#7c7c7c;transform:scaleX(0.9933);">Quick</div>
<div class="t" style="left:1167.00px;top:171.53px;font-size:14.5px;color:#7c7c7c;transform:scaleX(0.9620);">Styles</div>
<svg class="abs" style="left:1210.5px;top:175.5px" width="7" height="6" viewBox="0 0 7 6"><path d="M0.6 1 L3.5 4.6 L6.4 1" fill="none" stroke="#6a6a6a" stroke-width="1.1"/></svg>
<svg class="abs" style="left:1228px;top:105px" width="22" height="24" viewBox="0 0 22 24"><path d="M4 9 L11 2.5 L17.5 9 L11 15.5 Z" fill="none" stroke="#a6a6a6" stroke-width="1.5"/><path d="M18 6 V11" stroke="#a6a6a6" stroke-width="1.5"/><rect x="0.5" y="18" width="21" height="4.5" fill="#7a7a7a"/></svg>
<svg class="abs" style="left:1264px;top:115.5px" width="8" height="6" viewBox="0 0 8 6"><path d="M0.6 1 L4.0 4.6 L7.4 1" fill="none" stroke="#7a7a7a" stroke-width="1.1"/></svg>
<svg class="abs" style="left:1228px;top:138px" width="22" height="24" viewBox="0 0 22 24"><path d="M2 2 H12 M2 2 V12 M2 12 H5" fill="none" stroke="#a6a6a6" stroke-width="1.5"/><path d="M7 13 L17 3 L20 6 L10 16 L6.5 16.5 Z" fill="none" stroke="#a6a6a6" stroke-width="1.4"/><rect x="0.5" y="18" width="21" height="4.5" fill="#7a7a7a"/></svg>
<svg class="abs" style="left:1264px;top:148.5px" width="8" height="6" viewBox="0 0 8 6"><path d="M0.6 1 L4.0 4.6 L7.4 1" fill="none" stroke="#7a7a7a" stroke-width="1.1"/></svg>
<svg class="abs" style="left:1228px;top:171px" width="22" height="20" viewBox="0 0 22 20"><path d="M1.5 11 L8 3 H20 L20.5 9 L13.5 17.5 H3 Z" fill="#8a8a8a" stroke="#b0b0b0" stroke-width="1.3"/><path d="M3 11 H14 L20 3.5 M14 11 V17" fill="none" stroke="#272727" stroke-width="1.1"/></svg>
<svg class="abs" style="left:1256.5px;top:180.5px" width="8" height="6" viewBox="0 0 8 6"><path d="M0.6 1 L4.0 4.6 L7.4 1" fill="none" stroke="#7a7a7a" stroke-width="1.1"/></svg>
<div class="t" style="left:1131.00px;top:202.00px;font-size:13px;color:#ffffff;transform:scaleX(1.0052);">Drawing</div>
<svg class="abs" style="left:1279px;top:204px" width="12" height="12" viewBox="0 0 12 12"><path d="M1 5.5 V1 H5.5" fill="none" stroke="#9a9a9a" stroke-width="1.1"/><path d="M3 3 L10 10 M5 10.5 H10.5 V5" fill="none" stroke="#9a9a9a" stroke-width="1.1"/></svg>
<div class="abs" style="left:1293px;top:104px;width:1px;height:112px;background:#4a4a4a"></div>
<svg class="abs" style="left:1307px;top:105px" width="40" height="40" viewBox="0 0 40 40"><circle cx="24.5" cy="15" r="13" fill="none" stroke="#d0d0d0" stroke-width="1.8"/><path d="M15.5 24.5 L2 37.5" stroke="#d0d0d0" stroke-width="2"/></svg>
<div class="t" style="left:1305.00px;top:149.73px;font-size:14.5px;color:#ffffff;transform:scaleX(1.0395);">Editing</div>
<svg class="abs" style="left:1323px;top:174px" width="9" height="6" viewBox="0 0 9 6"><path d="M0.6 1 L4.5 4.6 L8.4 1" fill="none" stroke="#e6e6e6" stroke-width="1.3"/></svg>
<div class="abs" style="left:1363px;top:104px;width:1px;height:112px;background:#4a4a4a"></div>
<svg class="abs" style="left:1386px;top:105px" width="28" height="42" viewBox="0 0 28 42"><rect x="7" y="2" width="13.5" height="25" rx="6.75" fill="#1f6fd1" stroke="#5aa0ee" stroke-width="1"/><path d="M2.5 17 C2.5 27 8 31 13.75 31 C19.5 31 25 27 25 17" fill="none" stroke="#d0d0d0" stroke-width="1.9"/><path d="M13.75 31 V40" stroke="#d0d0d0" stroke-width="1.9"/></svg>
<div class="t" style="left:1377.00px;top:152.73px;font-size:14.5px;color:#ffffff;transform:scaleX(1.0608);">Dictate</div>
<svg class="abs" style="left:1395.5px;top:177.5px" width="9" height="6" viewBox="0 0 9 6"><path d="M0.6 1 L4.5 4.6 L8.4 1" fill="none" stroke="#e6e6e6" stroke-width="1.3"/></svg>
<div class="t" style="left:1384.00px;top:202.50px;font-size:13px;color:#ffffff;transform:scaleX(0.9449);">Voice</div>
<div class="abs" style="left:1437px;top:104px;width:1px;height:112px;background:#4a4a4a"></div>
<svg class="abs" style="left:1468px;top:105px" width="38" height="40" viewBox="0 0 38 40"><path d="M24 3 H2.5 V37.5 H24.5 V22" fill="none" stroke="#2b88d8" stroke-width="1.9"/><path d="M8 25 L24 9 L29 14 L13 30 Z" fill="#272727" stroke="#2b88d8" stroke-width="1.8"/><path d="M11.5 24.5 L23.5 12.5" stroke="#2b88d8" stroke-width="1.6"/><path d="M26 6 L30 2 L36 8 L32 12 Z" fill="none" stroke="#2b88d8" stroke-width="1.8"/></svg>
<div class="t" style="left:1451.00px;top:152.03px;font-size:14.5px;color:#ffffff;transform:scaleX(1.0115);">Sensitivity</div>
<svg class="abs" style="left:1479.5px;top:175.5px" width="8" height="6" viewBox="0 0 8 6"><path d="M0.6 1 L4.0 4.6 L7.4 1" fill="none" stroke="#e6e6e6" stroke-width="1.3"/></svg>
<div class="t" style="left:1455.00px;top:204.50px;font-size:13px;color:#ffffff;transform:scaleX(0.9573);">Sensitivity</div>
<div class="abs" style="left:1529px;top:104px;width:1px;height:112px;background:#4a4a4a"></div>
<svg class="abs" style="left:1550px;top:107px" width="38" height="38" viewBox="0 0 38 38"><rect x="1.5" y="1.5" width="35" height="35" fill="none" stroke="#d24726" stroke-width="2"/><rect x="5.5" y="5.5" width="12" height="12" fill="none" stroke="#d24726" stroke-width="1.8"/><rect x="20.5" y="5.5" width="12" height="12" fill="none" stroke="#d24726" stroke-width="1.8"/><rect x="5.5" y="20.5" width="12" height="12" fill="none" stroke="#d24726" stroke-width="1.8"/><rect x="20.5" y="20.5" width="12" height="12" fill="none" stroke="#d24726" stroke-width="1.8"/></svg>
<div class="t" style="left:1543.00px;top:152.03px;font-size:14.5px;color:#ffffff;transform:scaleX(1.0558);">Add-ins</div>
<div class="t" style="left:1545.00px;top:204.50px;font-size:13px;color:#ffffff;transform:scaleX(1.0227);">Add-ins</div>
<div class="abs" style="left:1607px;top:104px;width:1px;height:112px;background:#4a4a4a"></div>
<svg class="abs" style="left:1641px;top:104px" width="40" height="38" viewBox="0 0 40 38"><rect x="2" y="10" width="33" height="25.5" fill="none" stroke="#6f6f6f" stroke-width="2"/><path d="M2 17 H24 M16 17 V35.5" stroke="#6f6f6f" stroke-width="2"/><path d="M28.5 1 Q29.5 6.5 34.5 7.5 Q29.5 8.5 28.5 14 Q27.5 8.5 22.5 7.5 Q27.5 6.5 28.5 1 Z" fill="#7a7a7a"/><path d="M35 13 Q35.5 15.5 38 16 Q35.5 16.5 35 19 Q34.5 16.5 32 16 Q34.5 15.5 35 13 Z" fill="#7a7a7a"/></svg>
<div class="t" style="left:1638.00px;top:152.03px;font-size:14.5px;color:#7c7c7c;transform:scaleX(0.9945);">Design</div>
<div class="t" style="left:1621.00px;top:172.23px;font-size:14.5px;color:#7c7c7c;transform:scaleX(1.0031);">Suggestions</div>
<svg class="abs" style="left:1713px;top:107px" width="40" height="38" viewBox="0 0 40 38"><defs><linearGradient id="cg1" x1="0" y1="0" x2="0" y2="1"><stop offset="0" stop-color="#2a86d8"/><stop offset=".33" stop-color="#3a8fd8"/><stop offset=".5" stop-color="#5cc16a"/><stop offset=".72" stop-color="#f0a020"/><stop offset="1" stop-color="#f0552a"/></linearGradient>
<linearGradient id="cg2" x1="0" y1="0" x2="0" y2="1"><stop offset="0" stop-color="#9cb0f0"/><stop offset=".3" stop-color="#e88a8a"/><stop offset=".75" stop-color="#e8847a"/><stop offset="1" stop-color="#f0a030"/></linearGradient></defs>
<path d="M9 2 H26 Q31 2 32 6 L33 11 H25 L19.5 30 Q18 35 13 36 H12 Q7 36 5 31 L2 24 Q1.5 21 2.3 18 L5.5 6 Q6.5 2 9 2 Z" fill="url(#cg1)"/>
<path d="M25 11 H33 Q37.5 11 38.5 15.5 L38.8 24 Q38.5 28 37.5 31 L36.5 33 Q35 36.5 30.5 36.5 H14 Q18.5 35.5 19.8 30.5 Z" fill="url(#cg2)"/>
<path d="M25.5 11.5 L19.8 31" stroke="#272727" stroke-width="2.2"/></svg>
<div class="t" style="left:1708.00px;top:152.03px;font-size:14.5px;color:#ffffff;transform:scaleX(1.1050);">Copilot</div>
<div class="t" style="left:1667.00px;top:204.50px;font-size:13px;color:#ffffff;transform:scaleX(1.0370);">Copilot</div>
<div class="abs" style="left:1770px;top:104px;width:1px;height:112px;background:#4a4a4a"></div>
<svg class="abs" style="left:1884px;top:200px" width="14" height="9" viewBox="0 0 14 9"><path d="M1 1.5 L7 7.5 L13 1.5" fill="none" stroke="#e6e6e6" stroke-width="1.4"/></svg>
<div class="abs" style="left:1408px;top:239px;width:496px;height:857px;background:#f9f9f9"></div>
<svg class="abs" style="left:1458px;top:263px" width="22" height="17" viewBox="0 0 22 17"><path d="M1 1.8 H17 M1 7.5 H20 M1 13.2 H13" stroke="#424242" stroke-width="1.3"/></svg>
<svg class="abs" style="left:1498px;top:261px" width="22" height="22" viewBox="0 0 22 22"><path d="M10.5 1.5 C8 3.3 5 4.3 2.3 4.3 V10.5 C2.3 15.5 5.6 18.5 10.5 20.5 C15.4 18.5 18.7 15.5 18.7 10.5 V4.3 C16 4.3 13 3.3 10.5 1.5 Z" fill="none" stroke="#2f9e3e" stroke-width="1.5"/><path d="M6.8 10.8 L9.4 13.4 L14.2 8.4" fill="none" stroke="#2f9e3e" stroke-width="1.5"/></svg>
<div class="abs" style="left:1592px;top:252px;width:80px;height:39px;box-sizing:border-box;border:1px solid #dcdcdc;border-radius:9px;background:#f4f4f4;overflow:hidden"><div class="abs" style="left:0;top:0;width:40px;height:39px;background:#ffffff;border-right:1px solid #dcdcdc"></div></div>
<svg class="abs" style="left:1601px;top:261px" width="22" height="21" viewBox="0 0 22 21"><path d="M7.5 5 V3 A1.5 1.5 0 0 1 9 1.5 H13 A1.5 1.5 0 0 1 14.5 3 V5" fill="none" stroke="#c43e1c" stroke-width="1.5"/><rect x="1.5" y="5" width="19" height="14.5" rx="2.5" fill="#c43e1c"/><path d="M1.5 11.5 H20.5" stroke="#f9f9f9" stroke-width="1"/><rect x="9.5" y="10" width="3" height="3" rx="0.8" fill="#ffffff"/></svg>
<svg class="abs" style="left:1640px;top:261px" width="23" height="23" viewBox="0 0 23 23"><circle cx="11.5" cy="11.5" r="9.6" fill="none" stroke="#616161" stroke-width="1.4"/><ellipse cx="11.5" cy="11.5" rx="4.3" ry="9.6" fill="none" stroke="#616161" stroke-width="1.3"/><path d="M2.2 8.3 H20.8 M2.2 14.7 H20.8" stroke="#616161" stroke-width="1.3"/></svg>
<div class="abs" style="left:1735px;top:254px;width:35px;height:35px;border-radius:8px;background:#c63f1d"></div>
<svg class="abs" style="left:1742px;top:261px" width="21" height="21" viewBox="0 0 21 21"><path d="M10 3.5 H6 A2.5 2.5 0 0 0 3.5 6 V15 A2.5 2.5 0 0 0 6 17.5 H15 A2.5 2.5 0 0 0 17.5 15 V11" fill="none" stroke="#fff" stroke-width="1.5"/><path d="M8.5 12.5 L16.8 4.2" stroke="#fff" stroke-width="1.6" stroke-linecap="round"/></svg>
<div class="abs" style="left:1793.2px;top:270.2px;width:2.6px;height:2.6px;border-radius:50%;background:#424242"></div>
<div class="abs" style="left:1799.2px;top:270.2px;width:2.6px;height:2.6px;border-radius:50%;background:#424242"></div>
<div class="abs" style="left:1805.2px;top:270.2px;width:2.6px;height:2.6px;border-radius:50%;background:#424242"></div>
<svg class="abs" style="left:1842px;top:262px" width="18" height="18" viewBox="0 0 18 18"><path d="M1.5 1.5 L16 16 M16 1.5 L1.5 16" stroke="#424242" stroke-width="1.4"/></svg>
<div class="t" style="left:1444.00px;top:440.29px;font-size:26px;color:#242424;transform:scaleX(0.9458);-webkit-text-stroke:0.7px #242424;">Need a creative spark?</div>
<div class="abs" style="left:1428px;top:589px;width:439px;height:103px;box-sizing:border-box;border:1px solid #e3e3e3;border-radius:20px;background:#ffffff;box-shadow:0 1.5px 1px rgba(0,0,0,0.18)"></div>
<div class="t" style="left:1449.00px;top:606.12px;font-size:19px;color:#616161;transform:scaleX(0.9046);">Message Copilot</div>
<svg class="abs" style="left:1450px;top:650px" width="22" height="22" viewBox="0 0 22 22"><path d="M10.5 1 V20.5 M1 10.8 H20.5" stroke="#424242" stroke-width="1.4"/></svg>
<svg class="abs" style="left:1770px;top:651px" width="16" height="22" viewBox="0 0 16 22"><rect x="4.2" y="1" width="7.4" height="12.5" rx="3.7" fill="none" stroke="#424242" stroke-width="1.4"/><path d="M1.5 9.5 C1.5 14 4.5 16.5 7.9 16.5 C11.3 16.5 14.3 14 14.3 9.5 M7.9 16.5 V20.5" fill="none" stroke="#424242" stroke-width="1.4"/></svg>
<svg class="abs" style="left:1816px;top:650px" width="22" height="22" viewBox="0 0 22 22"><path d="M1.5 8.5 V13.5 M6 4 V18 M10.8 1 V21 M15.6 4.5 V17.5 M20 8 V14" stroke="#424242" stroke-width="1.4" stroke-linecap="round"/></svg>
<div class="abs" style="left:1428px;top:721px;width:438px;height:52px;box-sizing:border-box;border:1px solid #e4e4e4;border-radius:13px;background:#ffffff"></div>
<div class="t" style="left:1444.50px;top:739.98px;font-size:15.5px;color:#424242;transform:scaleX(0.9851);-webkit-text-stroke:0.45px #424242;">Create an image for this slide</div>
<div class="abs" style="left:1428px;top:791px;width:438px;height:52px;box-sizing:border-box;border:1px solid #e4e4e4;border-radius:13px;background:#ffffff"></div>
<div class="t" style="left:1444.50px;top:809.78px;font-size:15.5px;color:#424242;transform:scaleX(0.9847);-webkit-text-stroke:0.45px #424242;">Summarize this presentation</div>
<div class="abs" style="left:1428px;top:860px;width:438px;height:52px;box-sizing:border-box;border:1px solid #e4e4e4;border-radius:13px;background:#ffffff"></div>
<div class="t" style="left:1444.50px;top:879.18px;font-size:15.5px;color:#424242;transform:scaleX(0.9833);-webkit-text-stroke:0.45px #424242;">What is the key takeaway from this slide?</div>
<div class="t" style="left:1439.00px;top:936.08px;font-size:15.5px;color:#424242;transform:scaleX(0.9219);">See more</div>
<svg class="abs" style="left:1508px;top:939px" width="13" height="9" viewBox="0 0 13 9"><path d="M1.5 2 L6.3 6.8 L11.1 2" fill="none" stroke="#424242" stroke-width="1.3"/></svg>
<div class="t" style="left:1426.00px;top:1063.18px;font-size:15.5px;color:#5e6470;transform:scaleX(0.9613);">M365 Copilot (Premium)</div>
<svg class="abs" style="left:1600px;top:1062px" width="16" height="16" viewBox="0 0 16 16"><circle cx="7.7" cy="7.7" r="6.4" fill="none" stroke="#424242" stroke-width="1.3"/><path d="M7.7 6.5 V11" stroke="#424242" stroke-width="1.4"/><circle cx="7.7" cy="4.4" r="0.9" fill="#424242"/></svg>
<svg class="abs" style="left:17px;top:245px" width="10" height="13" viewBox="0 0 10 13"><path d="M2 1.5 L7.5 6.5 L2 11.5" fill="none" stroke="#e6e6e6" stroke-width="2"/></svg>
<div class="t" style="left:0px;top:0px;font-size:14.5px;color:#e6e6e6;transform-origin:0 0;transform:translate(16.5px,351px) rotate(-90deg) scaleX(1.02)">Thumbnails</div>
<div class="abs" style="left:72px;top:255px;width:40px;height:40px;box-sizing:border-box;border:1px solid #6a6a6a;border-radius:9px;background:#2a2a2a"></div>
<svg class="abs" style="left:72px;top:255px" width="40" height="40" viewBox="0 0 40 40"><path d="M20.4 10.1 Q21.24 14.86 26.0 15.7 Q21.24 16.54 20.4 21.299999999999997 Q19.56 16.54 14.799999999999999 15.7 Q19.56 14.86 20.4 10.1 Z M26 18.9 Q26.54 21.96 29.6 22.5 Q26.54 23.04 26 26.1 Q25.46 23.04 22.4 22.5 Q25.46 21.96 26 18.9 Z" fill="#fff"/><path d="M11.5 23.8 L16 19.8 M15.3 24.6 L18.6 21.7 M11.5 28.8 L13.8 26.8 M16.5 29 L19.8 26.2" stroke="#fff" stroke-width="2" stroke-linecap="round"/></svg>
<svg class="abs" style="left:1375px;top:227px" width="13" height="10" viewBox="0 0 13 10"><path d="M6.5 1 L12 9 H1 Z" fill="#9a9a9a" stroke="#9a9a9a" stroke-width="1" stroke-linejoin="round"/></svg>
<svg class="abs" style="left:1375px;top:1029px" width="13" height="10" viewBox="0 0 13 10"><path d="M1 1 H12 L6.5 9 Z" fill="#9a9a9a" stroke="#9a9a9a" stroke-width="1" stroke-linejoin="round"/></svg>
<svg class="abs" style="left:1374px;top:1046px" width="14" height="16" viewBox="0 0 14 16"><path d="M7 1 L12.5 7.5 H1.5 Z M7 6.5 L12.5 13.5 H1.5 Z" fill="#9a9a9a"/></svg>
<svg class="abs" style="left:1374px;top:1066px" width="14" height="16" viewBox="0 0 14 16"><path d="M1.5 1.5 H12.5 L7 8 Z M1.5 7.5 H12.5 L7 14.5 Z" fill="#9a9a9a"/></svg>
<div class="abs" style="left:0;top:1140px;width:1912px;height:1px;background:#3a3a3a"></div>
<div class="t" style="left:15.00px;top:1120.57px;font-size:13.5px;color:#e8e8e8;transform:scaleX(0.9778);">Slide 2 of 9</div>
<svg class="abs" style="left:104px;top:1116px" width="22" height="22" viewBox="0 0 22 22"><path d="M2 2.5 H8 C9.5 2.5 10.5 3.5 10.5 5 V16.5 C10.5 15.5 9.5 15 8.5 15 H2 Z M19 2.5 H13 C11.5 2.5 10.5 3.5 10.5 5" fill="none" stroke="#e0e0e0" stroke-width="1.3"/><path d="M12.5 15 L15 18 L20 12" fill="none" stroke="#e0e0e0" stroke-width="1.4"/></svg>
<div class="t" style="left:145.00px;top:1120.57px;font-size:13.5px;color:#e8e8e8;transform:scaleX(0.9420);">English (United States)</div>
<svg class="abs" style="left:296px;top:1116px" width="21" height="22" viewBox="0 0 21 22"><circle cx="9" cy="3" r="1.8" fill="none" stroke="#e0e0e0" stroke-width="1.2"/><path d="M1.5 6 L6.5 7 H11.5 L16.5 6 M6.5 7 V11 L4 19.5 M11.5 7 V10" fill="none" stroke="#e0e0e0" stroke-width="1.3"/><path d="M10.5 15.5 L13 18.5 L19 11.5" fill="none" stroke="#e0e0e0" stroke-width="1.4"/></svg>
<div class="t" style="left:319.00px;top:1120.57px;font-size:13.5px;color:#e8e8e8;transform:scaleX(0.9814);">Accessibility: Good to go</div>
<svg class="abs" style="left:1244px;top:1115px" width="23" height="24" viewBox="0 0 23 24"><path d="M7.5 4.5 L11 1.5 L14.5 4.5" fill="none" stroke="#e0e0e0" stroke-width="1.3"/><path d="M1.5 9 H20.5 M1.5 13.5 H20.5 M1.5 18 H20.5 M1.5 22.5 H20.5" stroke="#e0e0e0" stroke-width="1.3"/></svg>
<div class="t" style="left:1268.00px;top:1120.57px;font-size:13.5px;color:#e8e8e8;transform:scaleX(0.9929);">Notes</div>
<svg class="abs" style="left:1324px;top:1117px" width="22" height="22" viewBox="0 0 22 22"><path d="M5 14.5 H1.5 V1.5 H18.5 V8" fill="none" stroke="#e0e0e0" stroke-width="1.3"/><circle cx="13.5" cy="14.5" r="3.2" fill="none" stroke="#e0e0e0" stroke-width="2.4" stroke-dasharray="1.6 1.2"/><circle cx="13.5" cy="14.5" r="1.2" fill="#e0e0e0"/></svg>
<div class="t" style="left:1346.00px;top:1120.57px;font-size:13.5px;color:#e8e8e8;transform:scaleX(0.9509);">Display Settings</div>
<div class="abs" style="left:1464px;top:1114px;width:49px;height:27px;background:#2a2a2a"></div>
<svg class="abs" style="left:1478px;top:1117px" width="21" height="19" viewBox="0 0 21 19"><rect x="1" y="1" width="19" height="16.5" fill="none" stroke="#e0e0e0" stroke-width="1.3"/><path d="M4.5 1 V17.5" stroke="#e0e0e0" stroke-width="1.3"/><rect x="7.5" y="4" width="9.5" height="7" fill="none" stroke="#e0e0e0" stroke-width="1.3"/><path d="M7.5 14 H17" stroke="#e0e0e0" stroke-width="1.3"/></svg>
<svg class="abs" style="left:1528px;top:1117px" width="21" height="19" viewBox="0 0 21 19"><rect x="1" y="1" width="7.5" height="6.5" fill="none" stroke="#e0e0e0" stroke-width="1.4"/><rect x="11.5" y="1" width="7.5" height="6.5" fill="none" stroke="#e0e0e0" stroke-width="1.4"/><rect x="1" y="10.5" width="7.5" height="6.5" fill="none" stroke="#e0e0e0" stroke-width="1.4"/><rect x="11.5" y="10.5" width="7.5" height="6.5" fill="none" stroke="#e0e0e0" stroke-width="1.4"/></svg>
<svg class="abs" style="left:1578px;top:1116px" width="21" height="20" viewBox="0 0 21 20"><path d="M10.5 3.5 C8 2 4 1.5 1 2.2 V17.5 C4 16.8 8 17.3 10.5 18.5 C13 17.3 17 16.8 20 17.5 V2.2 C17 1.5 13 2 10.5 3.5 Z M10.5 3.5 V18.5" fill="none" stroke="#e0e0e0" stroke-width="1.3"/><path d="M3.5 6.5 H8 M3.5 9.5 H8 M3.5 12.5 H8 M13 6.5 H17.5 M13 9.5 H17.5 M13 12.5 H17.5" stroke="#e0e0e0" stroke-width="1"/></svg>
<svg class="abs" style="left:1628px;top:1116px" width="20" height="22" viewBox="0 0 20 22"><path d="M1 1.5 H19 M2.5 1.5 V10.5 H17.5 V1.5" fill="none" stroke="#e0e0e0" stroke-width="1.3"/><path d="M7 4 L11.5 6 L7 8 Z" fill="none" stroke="#e0e0e0" stroke-width="1"/><path d="M10 10.5 V19 M5 19.5 H15" stroke="#e0e0e0" stroke-width="1.5"/></svg>
<div class="abs" style="left:1670px;top:1126px;width:10px;height:1.2px;background:#cfcfcf"></div>
<div class="abs" style="left:1686px;top:1126.5px;width:125px;height:1px;background:#8a8a8a"></div>
<div class="abs" style="left:1745px;top:1118px;width:7px;height:17px;background:#a0a0a0"></div>
<svg class="abs" style="left:1814px;top:1120px" width="14" height="14" viewBox="0 0 14 14"><path d="M7 1 V13 M1 7 H13" stroke="#cfcfcf" stroke-width="1.2"/></svg>
<div class="t" style="left:1844.00px;top:1120.57px;font-size:13.5px;color:#e8e8e8;transform:scaleX(0.8889);">107 %</div>
<svg class="abs" style="left:1894px;top:1116px" width="20" height="22" viewBox="0 0 20 22"><rect x="6" y="6.5" width="8" height="8.5" fill="none" stroke="#e0e0e0" stroke-width="1.4"/><path d="M10 1.5 V4.5 M8 3 L10 1 L12 3 M10 17 V20.5 M8 18.5 L10 20.5 L12 18.5 M1.5 10.8 H4.5 M3 8.8 L1 10.8 L3 12.8 M15.5 10.8 H18.5 M17 8.8 L19 10.8 L17 12.8" fill="none" stroke="#e0e0e0" stroke-width="1.3"/></svg>
</body></html>
